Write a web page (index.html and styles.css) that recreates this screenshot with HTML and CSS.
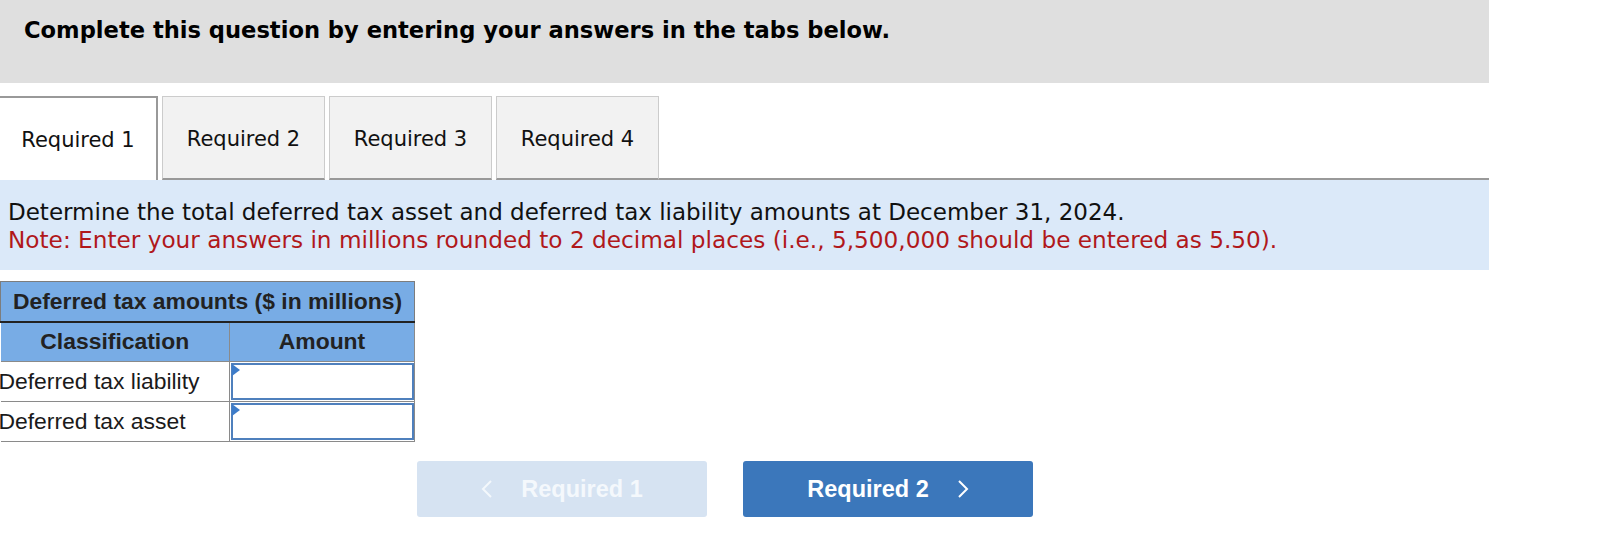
FILE: index.html
```html
<!DOCTYPE html>
<html>
<head>
<meta charset="utf-8">
<link rel="stylesheet" href="styles.css">
</head>
<body>
<div class="page">
  <div class="banner">
    <h1 class="banner-title">Complete this question by entering your answers in the tabs below.</h1>
  </div>
  <div class="tabs">
    <div class="tab tab-active">Required 1</div>
    <div class="tab">Required 2</div>
    <div class="tab">Required 3</div>
    <div class="tab">Required 4</div>
    <div class="tab-fill"></div>
  </div>
  <div class="info">
    <p class="info-line">Determine the total deferred tax asset and deferred tax liability amounts at December 31, 2024.</p>
    <p class="info-note">Note: Enter your answers in millions rounded to 2 decimal places (i.e., 5,500,000 should be entered as 5.50).</p>
  </div>
  <table class="grid">
    <tr>
      <th class="grid-title" colspan="2">Deferred tax amounts ($ in millions)</th>
    </tr>
    <tr>
      <th class="grid-head col-a">Classification</th>
      <th class="grid-head col-b">Amount</th>
    </tr>
    <tr>
      <td class="grid-label">Deferred tax liability</td>
      <td class="grid-input"><div class="input-box"><span class="marker"></span></div></td>
    </tr>
    <tr>
      <td class="grid-label">Deferred tax asset</td>
      <td class="grid-input"><div class="input-box"><span class="marker"></span></div></td>
    </tr>
  </table>
  <div class="nav">
    <div class="btn btn-prev">
      <svg class="chev" width="12" height="20" viewBox="0 0 12 20"><path d="M10 2 L2 10 L10 18" fill="none" stroke="currentColor" stroke-width="2"/></svg>
      <span>Required 1</span>
    </div>
    <div class="btn btn-next">
      <span>Required 2</span>
      <svg class="chev" width="12" height="20" viewBox="0 0 12 20"><path d="M2 2 L10 10 L2 18" fill="none" stroke="currentColor" stroke-width="2"/></svg>
    </div>
  </div>
</div>
</body>
</html>
```
FILE: styles.css
```css
html, body {
  margin: 0;
  padding: 0;
  background: #ffffff;
}
.page {
  width: 1489px;
  font-family: "DejaVu Sans", Verdana, sans-serif;
}
.banner {
  background: #dfdfdf;
  height: 83px;
  padding: 15px 0 0 24px;
  box-sizing: border-box;
}
.banner-title {
  margin: 0;
  font-size: 22.6px;
  font-weight: bold;
  color: #000;
  line-height: 30px;
}
.tabs {
  display: flex;
  margin-top: 13px;
  height: 84px;
  gap: 4px;
}
.tab {
  width: 163px;
  box-sizing: border-box;
  background: #f2f2f2;
  border: 1px solid #cccccc;
  border-bottom: 2px solid #999999;
  display: flex;
  align-items: center;
  justify-content: center;
  padding-top: 2px;
  font-size: 21px;
  color: #111;
}
.tab-active {
  width: 158px;
  background: #ffffff;
  border: 2px solid #999999;
  border-left: none;
  border-bottom: none;
}
.tab-fill {
  flex: 1;
  border-bottom: 2px solid #999999;
  margin-left: -4px;
}
.info {
  background: #dbe9f9;
  height: 90px;
  padding: 18px 0 0 8px;
  box-sizing: border-box;
}
.info-line, .info-note {
  margin: 0;
  line-height: 28px;
  white-space: nowrap;
}
.info-line { color: #111; font-size: 23px; }
.info-note { color: #b0181b; font-size: 23.2px; }
.grid {
  margin-top: 11px;
  border-collapse: collapse;
  font-family: "Liberation Sans", Arial, sans-serif;
  font-size: 22.9px;
  color: #222;
}
.grid th, .grid td {
  padding: 0;
  height: 40px;
  box-sizing: border-box;
}
.grid-title {
  background: #78ace5;
  border: 1px solid #7d7d7d;
  border-bottom: 2px solid #222;
  text-align: center;
  font-weight: bold;
  width: 414px;
  height: 41px;
  white-space: nowrap;
}
.grid-head {
  background: #78ace5;
  border: 1px solid #8a8a8a;
  border-top: none;
  text-align: center;
  font-weight: bold;
}
.col-a { width: 229px; border-left: none; }
.col-b { width: 185px; }
.grid-label {
  text-align: left;
  border-bottom: 1px solid #8a8a8a;
  border-right: 1px solid #8a8a8a;
  text-indent: -2px;
  white-space: nowrap;
  color: #1a1a1a;
}
.grid-input {
  border-bottom: 1px solid #8a8a8a;
  border-right: 1px solid #8a8a8a;
  padding: 0;
}
.input-box {
  position: relative;
  height: 37px;
  margin: 1px 0 1px 1px;
  border: 2px solid #4f80bd;
  background: #fff;
  box-sizing: border-box;
}
.marker {
  position: absolute;
  left: -1px;
  top: -1px;
  width: 0;
  height: 0;
  border-top: 6px solid transparent;
  border-bottom: 6px solid transparent;
  border-left: 8px solid #3d7cc9;
}
.nav {
  display: flex;
  margin: 19px 0 0 417px;
  gap: 36px;
}
.btn {
  width: 290px;
  height: 56px;
  border-radius: 3px;
  display: flex;
  align-items: center;
  justify-content: center;
  gap: 28px;
  font-family: "Liberation Sans", Arial, sans-serif;
  font-weight: bold;
  font-size: 23.5px;
  color: #fff;
}
.btn-prev {
  background: #d6e3f2;
  color: #f4f8fc;
}
.btn-next {
  background: #3b77bb;
}
.chev { display: block; }
```
